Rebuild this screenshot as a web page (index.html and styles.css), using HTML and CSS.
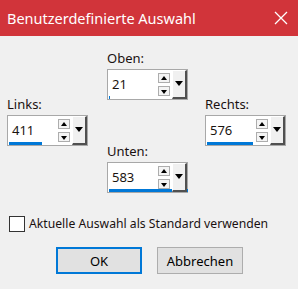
FILE: index.html
```html
<!DOCTYPE html>
<html lang="de">

<head>
    <meta charset="UTF-8">
    <title>Benutzerdefinierte Auswahl</title>
    <link rel="stylesheet" href="styles.css">
</head>

<body>
    <div class="titlebar">
        <span class="title">Benutzerdefinierte Auswahl</span>
        <svg class="close" width="14" height="14" viewBox="0 0 14 14">
            <path d="M1 1 L13 13 M13 1 L1 13" stroke="#fff" stroke-width="1.3" fill="none" />
        </svg>
    </div>
    <div class="content">
        <div class="fields">
            <div class="field oben">
                <label>Oben:</label>
                <div class="spin">
                    <div class="edit">21<span class="bar" style="width: 1px"></span></div>
                    <div class="arrows"><span class="up"></span><span class="down"></span></div>
                    <div class="drop"></div>
                </div>
            </div>
            <div class="field links">
                <label>Links:</label>
                <div class="spin">
                    <div class="edit">411<span class="bar" style="width: 33px"></span></div>
                    <div class="arrows"><span class="up"></span><span class="down"></span></div>
                    <div class="drop"></div>
                </div>
            </div>
            <div class="field rechts">
                <label>Rechts:</label>
                <div class="spin">
                    <div class="edit">576<span class="bar" style="width: 46px"></span></div>
                    <div class="arrows"><span class="up"></span><span class="down"></span></div>
                    <div class="drop"></div>
                </div>
            </div>
            <div class="field unten">
                <label>Unten:</label>
                <div class="spin">
                    <div class="edit">583<span class="bar" style="width: 79px"></span></div>
                    <div class="arrows"><span class="up"></span><span class="down"></span></div>
                    <div class="drop"></div>
                </div>
            </div>
        </div>
        <div class="check">
            <span class="box"></span>
            <span>Aktuelle Auswahl als Standard verwenden</span>
        </div>
        <div class="buttons">
            <button class="default">OK</button>
            <button>Abbrechen</button>
        </div>
    </div>
</body>

</html>
```

FILE: styles.css
```css
body {
    margin: 0;
    padding: 0;
    width: 298px;
    height: 289px;
    background-color: #f0f0f0;
    font-family: 'Noto Sans', sans-serif;
    font-size: 13px;
    color: #1a1010;
    overflow: hidden;
}

.titlebar {
    height: 36px;
    background-color: #d1343a;
    color: #fff;
    display: flex;
    align-items: center;
    justify-content: space-between;
    padding: 0 10px 0 7px;
}

.title {
    font-size: 14.5px;
}

.content {
    padding: 14px 0 0 7px;
}

.fields {
    display: grid;
    grid-template-columns: 100px 98px 81px;
    grid-template-rows: 46px 47px 50px;
}

.oben { grid-column: 2; grid-row: 1; }
.links { grid-column: 1; grid-row: 2; }
.rechts { grid-column: 3; grid-row: 2; }
.unten { grid-column: 2; grid-row: 3; }

.field label {
    display: block;
    height: 16px;
    line-height: 16px;
    margin-bottom: 3px;
}

.spin {
    width: 81px;
    height: 31px;
    box-sizing: border-box;
    border: 1px solid #a8a8a8;
    background-color: #fff;
    display: flex;
}

.edit {
    position: relative;
    flex: 1;
    padding-left: 4px;
    line-height: 29px;
    color: #1a1410;
}

.bar {
    position: absolute;
    left: 1px;
    bottom: 0;
    height: 3px;
    background-color: #0078d7;
}

.arrows {
    width: 12px;
    display: flex;
    flex-direction: column;
    justify-content: center;
    gap: 3px;
    margin-right: 2px;
}

.arrows span {
    display: block;
    height: 10px;
    box-sizing: border-box;
    border: 1px solid #adadad;
    background-color: #f4f4f4;
    position: relative;
}

.arrows span::after {
    content: '';
    position: absolute;
    left: 2px;
    border-left: 3px solid transparent;
    border-right: 3px solid transparent;
}

.arrows .up::after {
    top: 2px;
    border-bottom: 4px solid #000;
}

.arrows .down::after {
    top: 3px;
    border-top: 4px solid #000;
}

.drop {
    width: 12px;
    background-color: #f0f0f0;
    border-left: 1px solid #fff;
    border-top: 1px solid #fff;
    border-right: 2px solid #505050;
    border-bottom: 2px solid #505050;
    position: relative;
}

.drop::after {
    content: '';
    position: absolute;
    left: 2px;
    top: 10px;
    border-left: 4px solid transparent;
    border-right: 4px solid transparent;
    border-top: 5px solid #000;
}

.check {
    display: flex;
    align-items: center;
    gap: 4px;
    margin: 22px 0 0 2px;
    font-size: 12.2px;
}

.check .box {
    width: 14px;
    height: 14px;
    border: 1px solid #333;
    background-color: #fff;
}

.buttons {
    display: flex;
    gap: 15px;
    margin: 15px 0 0 49px;
}

button {
    width: 86px;
    height: 27px;
    font-family: inherit;
    font-size: 13px;
    color: #000;
    background-color: #e1e1e1;
    border: 1px solid #adadad;
    padding: 0;
}

button.default {
    border: 2px solid #0078d7;
}
```
